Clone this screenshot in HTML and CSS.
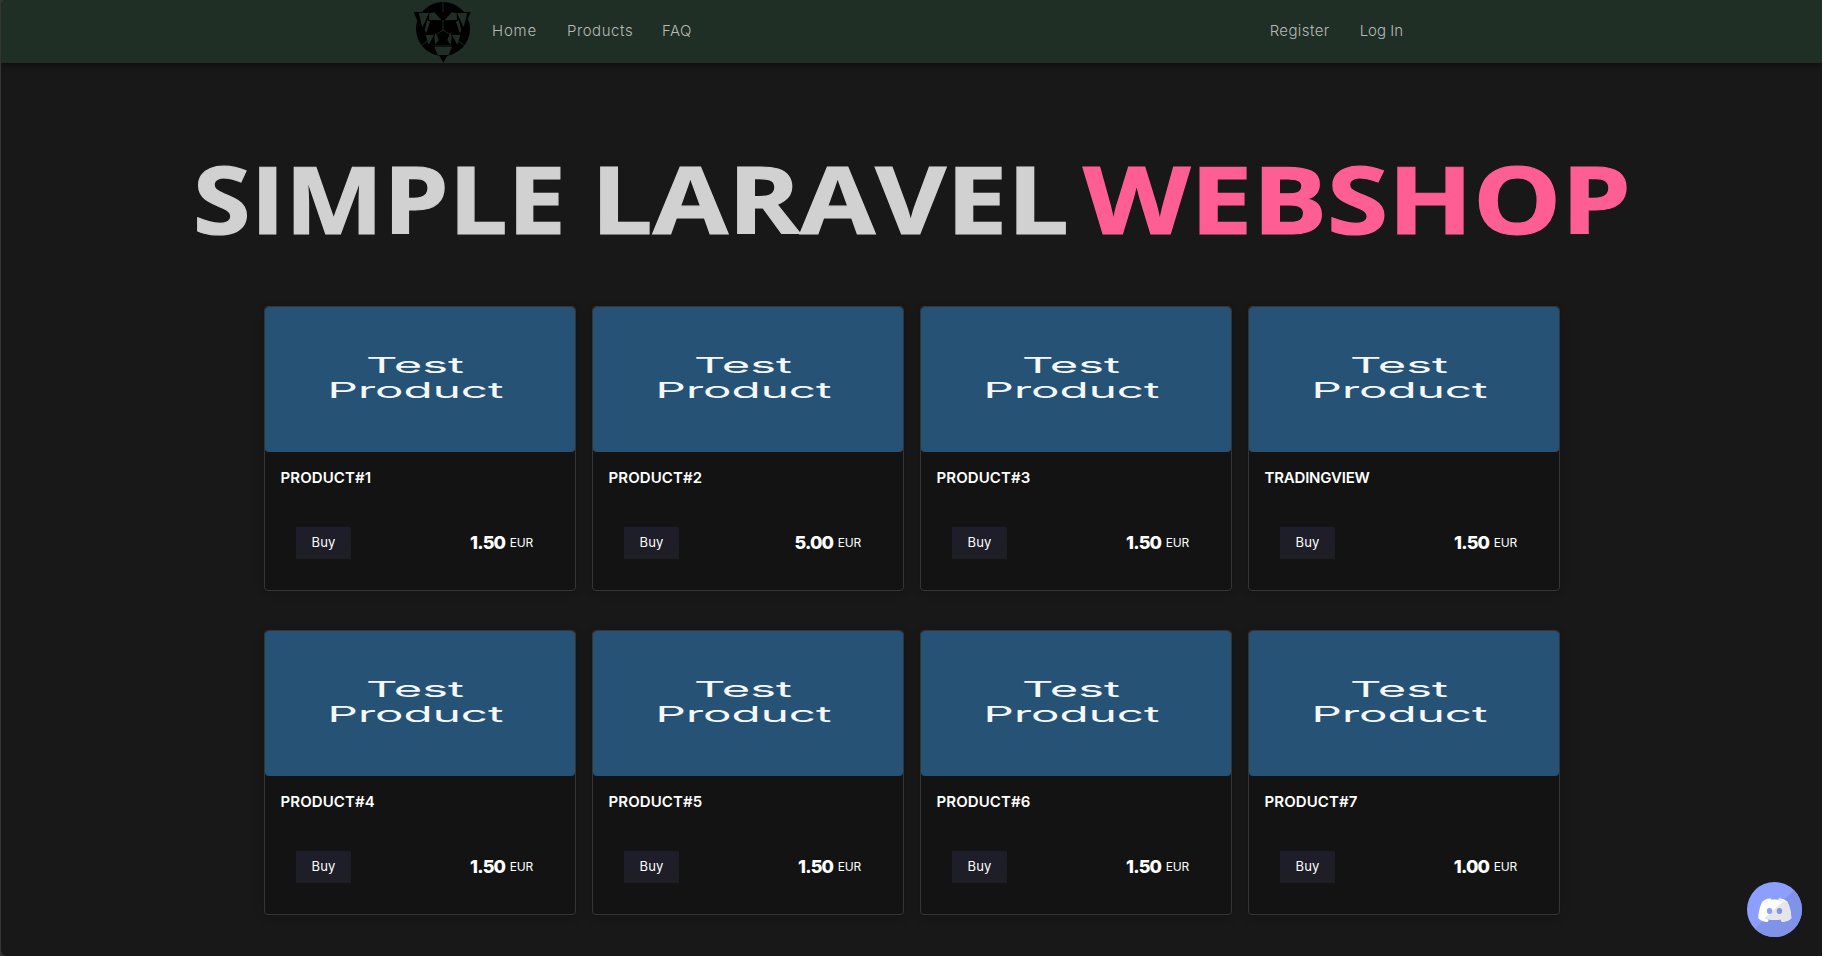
FILE: index.html
```
<!DOCTYPE html>
<html lang="en">
<head>
<meta charset="utf-8">
<title>Simple Laravel Webshop</title>
<link rel="stylesheet" href="styles.css">
</head>
<body>
<div class="page">
  <header class="navbar">
    <nav class="nav-inner">
      <svg class="logo" viewBox="42 0 174 186">
        <circle cx="129" cy="87" r="81" fill="#000"/>
        <path d="M41 36h30L54 66zM212 36h-30l17 30zM116 164h28l-14 23z" fill="#000"/>
        <g fill="#1f2f25">
          <path d="M56 39h31L67 82zM202 39h-31l20 43z"/>
          <path d="M88 40l15-3 22 24-38-1zM170 40l-15-3-22 24 38-1z"/>
          <path d="M82 60l8 5-11 34-5-8zM176 60l-8 5 11 34 5-8z"/>
          <path d="M77 105h25l-16 29zM181 105h-25l16 29z"/>
          <path d="M107 98l9 22-10 14-3-22zM151 98l-9 22 10 14 3-22z"/>
          <path d="M103 141h53l-10 24h-33z"/>
        </g>
        <g fill="none" stroke="#1f2f25" stroke-width="2.500">
          <path d="M129 5v31M129 60v32M108 104l21-14 21 14M65 136l20-14M193 136l-20-14M104 138h50"/>
        </g>
      </svg>
      <a class="link w-home">Home</a>
      <a class="link w-products">Products</a>
      <a class="link w-faq">FAQ</a>
      <span class="spacer"></span>
      <a class="link w-register">Register</a>
      <a class="link">Log In</a>
    </nav>
  </header>
  <h1 class="hero">
    <svg class="hero-art" viewBox="0 0 1440 100">
      <text class="hero-text" x="1" y="84" textLength="373" lengthAdjust="spacingAndGlyphs">SIMPLE</text>
      <text class="hero-text" x="399" y="84" textLength="478" lengthAdjust="spacingAndGlyphs">LARAVEL</text>
      <text class="hero-text pink" x="891" y="84" textLength="548" lengthAdjust="spacingAndGlyphs">WEBSHOP</text>
    </svg>
  </h1>
  <main class="grid" id="grid"></main>
  <a class="discord">
    <svg viewBox="0 0 56 56">
      <defs><clipPath id="disc"><circle cx="28" cy="28" r="28"/></clipPath></defs>
      <g clip-path="url(#disc)">
        <path fill="#8c9eff" d="M0 0h56v56H0z"/>
        <path fill="#8193e8" d="M56 0v56H0z"/>
      </g>
      <path fill="#fff" d="M24 16.500c-4 .3-7 2.200-8.500 3.500-2.500 5-4 11-4 17 2.500 3 6 3.500 9.500 3.700l1.300-2.200c-2-.5-3.300-1.300-4-2 6 3 14 3 20 0-.7.7-2 1.500-4 2l1.300 2.200c3.500-.2 7-1 9.500-3.700 0-6-1.500-12-4-17-1.500-1.300-4.500-3.200-8.500-3.500l-.7 1.500c2 .3 3.500.8 5 1.800-6-2.500-12-2.500-18 0 1.500-1 3.800-1.500 5.800-1.800z"/>
      <path class="face-shade" d="M37 19.500l4.100.500c2.500 5 4 11 4 17-2.500 2.700-6 3.500-9.500 3.700l-1.300-2.200 2-1c-6 2-13 1.500-18-1z"/>
      <ellipse cx="23" cy="29.500" rx="2.800" ry="3" fill="#8c9eff"/>
      <ellipse cx="33" cy="29.500" rx="2.800" ry="3" fill="#8193e8"/>
    </svg>
  </a>
</div>
<script src="app.js"></script>
</body>
</html>
```
FILE: styles.css
```
html { background: #fff; }
body { margin: 0 2px 0 0; font-family: Inter, "Liberation Sans", sans-serif; overflow: hidden; background: #fff; }
.page { box-sizing: border-box; height: 956px; border-radius: 6px 0 0 6px; background: #181818; box-shadow: -6px 0 0 #353535; overflow: hidden; position: relative; border-left: 1px solid #353535; }
.navbar { height: 63px; background: #1f2f25; box-shadow: 0 2px 6px rgba(0,0,0,.4); }
.nav-inner { display: flex; align-items: center; width: 989px; height: 62px; margin-left: 413px; }
.logo { width: 58px; height: 62px; margin-right: 20px; flex: none; }
.link { color: #b6b9b7; font-size: 15px; font-weight: 300; line-height: 24px; white-space: nowrap; }
.w-home { width: 75px; letter-spacing: .8px; }
.w-products { width: 95px; letter-spacing: .55px; }
.w-faq { letter-spacing: .5px; }
.w-register { width: 90px; letter-spacing: .4px; }
.spacer { flex: 1; }
.hero { margin: 87px 0 0 191px; height: 100px; }
.hero-art { display: block; width: 1440px; height: 100px; overflow: visible; }
.hero-text { font-family: "Open Sans", sans-serif; font-weight: 700; font-size: 94px; fill: #d1d1d1; stroke: #d1d1d1; stroke-width: 1.200px; }
.hero-text.pink { fill: #ff5e94; stroke: #ff5e94; }
.grid { display: grid; grid-template-columns: repeat(4, 312px); column-gap: 16px; row-gap: 39px; margin: 56px 0 0 263px; }
.card { box-sizing: border-box; height: 285px; border: 1px solid #353535; border-radius: 4px; background: #131313; box-shadow: 0 2px 10px rgba(0,0,0,.15); }
.thumb { display: block; width: 310px; height: 145px; border-radius: 4px; background: #265275; }
.thumb text { font-family: Inter, sans-serif; font-size: 22px; fill: #f4f8fa; }
.name { margin: 16px 0 0 15.500px; font-size: 15px; line-height: 20px; font-weight: 600; letter-spacing: .1px; color: #fff; }
.name.long { letter-spacing: -.2px; }
.buy-row { display: flex; align-items: center; justify-content: space-between; margin: 39px 42px 0 31px; }
.buy { box-sizing: border-box; width: 55px; height: 32px; background: linear-gradient(#1e1d2b, #1e1e25); color: #fff; font-size: 13px; letter-spacing: .2px; line-height: 31px; text-align: center; }
.price { display: flex; align-items: center; gap: 4.500px; color: #fff; font-size: 12px; padding-bottom: 2px; }
.price span { letter-spacing: -.2px; }
.amount { font-size: 18px; font-weight: 800; letter-spacing: -.8px; }
.discord { position: absolute; right: 20px; bottom: 19px; width: 55px; height: 55px; }
.discord svg { display: block; }
.face-shade { fill: #e5e6ea; }
```
FILE: app.js
```
const products = [
  ["PRODUCT#1", "1.50"], ["PRODUCT#2", "5.00"], ["PRODUCT#3", "1.50"], ["TRADINGVIEW", "1.50"],
  ["PRODUCT#4", "1.50"], ["PRODUCT#5", "1.50"], ["PRODUCT#6", "1.50"], ["PRODUCT#7", "1.00"]
];
document.getElementById("grid").innerHTML = products.map(([name, price]) => `
  <article class="card">
    <svg class="thumb" viewBox="0 0 310 145">
      <text x="101" y="65.500" textLength="98" lengthAdjust="spacingAndGlyphs">Test</text>
      <text x="62.500" y="91" textLength="176" lengthAdjust="spacingAndGlyphs">Product</text>
    </svg>
    <div class="name${name.length > 9 ? " long" : ""}">${name}</div>
    <div class="buy-row"><span class="buy">Buy</span>
      <span class="price"><b class="amount">${price}</b><span>EUR</span></span></div>
  </article>`).join("");
```
